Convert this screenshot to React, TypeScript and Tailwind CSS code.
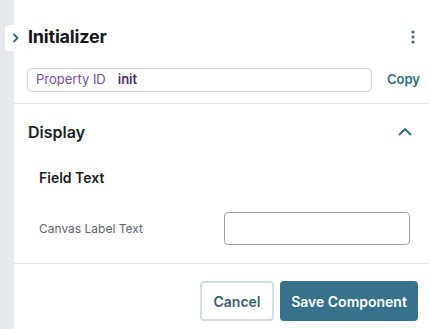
import React from "react";

export default function App() {
  return (
    <div className="relative flex h-[329px] w-[429px] overflow-hidden bg-white" style={{ fontFamily: "Inter, 'Noto Sans', sans-serif" }}>
      <div className="w-[14px] shrink-0 bg-[#e6eaef]" />
      <div className="absolute left-[5px] top-[25px] flex h-[26px] w-[16px] items-center justify-end rounded-l-[4px] bg-white pr-[1px]">
        <svg width="8" height="10" viewBox="0 0 8 10" fill="none">
          <path d="M2 1.5 L5.5 5 L2 8.5" stroke="#2f6d80" strokeWidth="1.8" strokeLinecap="round" strokeLinejoin="round" />
        </svg>
      </div>
      <div className="flex min-w-0 flex-1 flex-col">
        <div className="flex h-[59px] items-center justify-between pl-[14px] pr-[10px] pt-[15px]">
          <div className="text-[18px] font-bold leading-none tracking-[-0.2px] text-[#14171c]">Initializer</div>
          <svg width="6" height="14" viewBox="0 0 6 14" className="mr-[3px]">
            <circle cx="3" cy="2" r="1.6" fill="#2f6d80" />
            <circle cx="3" cy="7" r="1.6" fill="#2f6d80" />
            <circle cx="3" cy="12" r="1.6" fill="#2f6d80" />
          </svg>
        </div>
        <div className="mt-[9px] flex h-[24px] items-center pl-[13px] pr-[9px]">
          <div className="flex h-[24px] flex-1 items-center rounded-[5px] border border-[#dccbe4] px-[8px] text-[13px]">
            <span className="text-[#7b4f9b]">Property ID</span>
            <span className="ml-[12px] font-semibold text-[#4a2a68]">init</span>
          </div>
          <div className="ml-[15px] text-[13px] font-semibold text-[#2f6d80]">Copy</div>
        </div>
        <div className="mt-[11px] h-px bg-[#e3e6eb]" />
        <div className="flex h-[54px] items-center justify-between pl-[14px] pr-[17px] pt-[1px]">
          <div className="text-[16px] font-semibold text-[#1b1f25]">Display</div>
          <svg width="14" height="9" viewBox="0 0 14 9" fill="none">
            <path d="M1.5 7.5 L7 2 L12.5 7.5" stroke="#2f6d80" strokeWidth="1.8" strokeLinecap="round" strokeLinejoin="round" />
          </svg>
        </div>
        <div className="mt-[9px] pl-[25px] text-[14px] font-semibold text-[#1b1f25]">Field Text</div>
        <div className="mt-[24px] flex items-center pl-[25px] pr-[19px]">
          <div className="flex-1 text-[12px] text-[#5d6671]">Canvas Label Text</div>
          <div className="h-[33px] w-[186px] rounded-[4px] border border-[#9aa0a8] bg-white" />
        </div>
        <div className="mt-[18px] h-px bg-[#e3e6eb]" />
        <div className="mt-[17px] flex justify-end gap-[6px] pr-[11px]">
          <button className="h-[40px] w-[74px] rounded-[4px] border-2 border-[#d3dde5] bg-white text-[14px] font-semibold text-[#3a5f74]">Cancel</button>
          <button className="h-[40px] w-[138px] rounded-[4px] bg-[#37728a] text-[14px] font-semibold text-white">Save Component</button>
        </div>
      </div>
    </div>
  );
}
